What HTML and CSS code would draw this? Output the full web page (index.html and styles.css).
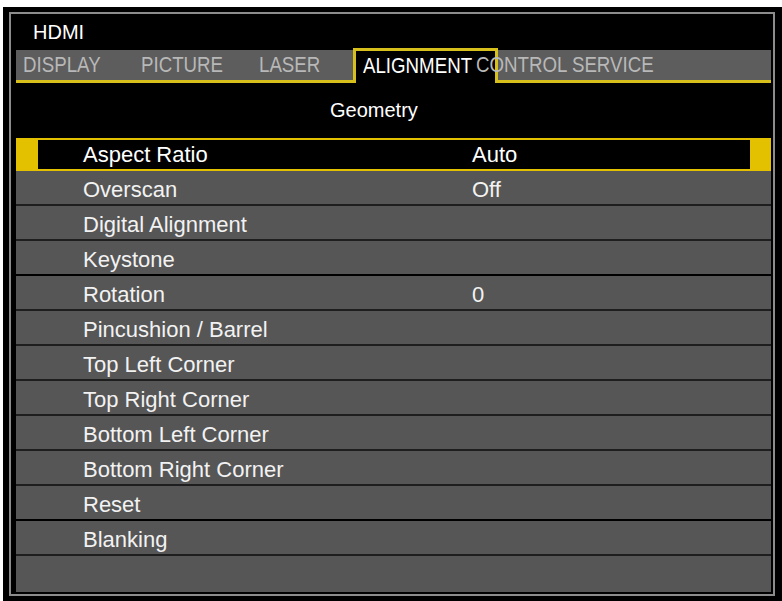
FILE: index.html
```html
<!DOCTYPE html>
<html lang="en">
<head>
    <meta charset="UTF-8">
    <meta name="viewport" content="width=device-width, initial-scale=1.0">
    <title>Geometry - HDMI</title>
    <link rel="stylesheet" href="styles.css">
</head>
<body>
    <div class="screen">
        <div class="frame">
            <div class="source">HDMI</div>

            <!-- Top menu tabs -->
            <div class="tabs">
                <div class="tab tab-wide"><span class="tab-label">DISPLAY</span></div>
                <div class="tab tab-wide"><span class="tab-label">PICTURE</span></div>
                <div class="tab tab-short"><span class="tab-label">LASER</span></div>
                <div class="tab tab-active"><span class="tab-label">ALIGNMENT</span></div>
                <div class="tab tab-overlap"><span class="tab-label">CONTROL SERVICE</span></div>
            </div>

            <div class="title">Geometry</div>

            <ul class="menu">
                <li class="row selected"><span class="label">Aspect Ratio</span><span class="value">Auto</span></li>
                <li class="row"><span class="label">Overscan</span><span class="value">Off</span></li>
                <li class="row"><span class="label">Digital Alignment</span><span class="value"></span></li>
                <li class="row sep"><span class="label">Keystone</span><span class="value"></span></li>
                <li class="row"><span class="label">Rotation</span><span class="value">0</span></li>
                <li class="row"><span class="label">Pincushion / Barrel</span><span class="value"></span></li>
                <li class="row"><span class="label">Top Left Corner</span><span class="value"></span></li>
                <li class="row"><span class="label">Top Right Corner</span><span class="value"></span></li>
                <li class="row"><span class="label">Bottom Left Corner</span><span class="value"></span></li>
                <li class="row"><span class="label">Bottom Right Corner</span><span class="value"></span></li>
                <li class="row sep"><span class="label">Reset</span><span class="value"></span></li>
                <li class="row"><span class="label">Blanking</span><span class="value"></span></li>
                <li class="row row-empty"></li>
            </ul>
        </div>
    </div>
</body>
</html>
```

FILE: styles.css
```css
body {
    margin: 0;
    background-color: #ffffff;
    font-family: "Liberation Sans", Arial, sans-serif;
}

/* Outer black bezel with the thin grey line */
.screen {
    width: 779px;
    height: 594px;
    margin: 7px 0 0 3px;
    padding: 5px 7px 5px 6px;
    box-sizing: border-box;
    background-color: #000;
}
.frame {
    height: 100%;
    box-sizing: border-box;
    border: 2px solid #8c8c8c;
    padding: 0 2px 2px 5px;
    display: flex;
    flex-direction: column;
}

.source {
    height: 34px;
    line-height: 36px;
    padding-left: 17px;
    font-size: 20px;
    color: #fff;
    flex: none;
}

/* Tabs */
.tabs {
    flex: none;
    display: flex;
    align-items: flex-start;
    height: 33px;
    box-sizing: border-box;
    margin-top: 2px;
    padding-left: 7px;
    background-color: #5d5d5d;
    border-bottom: 3px solid #d8c01c;
}
.tab {
    flex: none;
    height: 30px;
    line-height: 30px;
    font-size: 22px;
    color: #b8b8b8;
    white-space: nowrap;
}
.tab-wide {
    width: 118px;
}
.tab-short {
    width: 94px;
}
.tab-active {
    width: 145px;
    height: 35px;
    box-sizing: border-box;
    margin-top: -2px;
    padding-left: 7px;
    background-color: #000;
    border: 3px solid #d8c01c;
    border-bottom: 0;
    color: #fff;
}
.tab-overlap {
    margin-left: -22px;
}
.tab-label {
    display: inline-block;
    transform: scaleX(0.85);
    transform-origin: 0 50%;
}

.title {
    flex: none;
    height: 55px;
    line-height: 55px;
    padding-left: 314px;
    font-size: 20px;
    color: #fff;
}

/* Menu rows */
.menu {
    flex: 1;
    display: flex;
    flex-direction: column;
    list-style: none;
    margin: 0;
    padding: 0;
}
.row {
    flex: none;
    display: grid;
    grid-template-columns: 389px 1fr;
    height: 35px;
    box-sizing: border-box;
    padding: 4px 0 0 67px;
    line-height: 29px;
    font-size: 22px;
    color: #f2f2f2;
    background-color: #565656;
    border-bottom: 2px solid #1e1e1e;
    white-space: nowrap;
}
.row.sep {
    border-bottom-color: #000;
}
.row.selected {
    height: 33px;
    padding: 0 0 0 45px;
    background-color: #000;
    border-style: solid;
    border-color: #e4c100;
    border-width: 2px 21px 2px 22px;
    color: #fff;
}
.row-empty {
    flex: 1;
    border-bottom: 0;
}
```
